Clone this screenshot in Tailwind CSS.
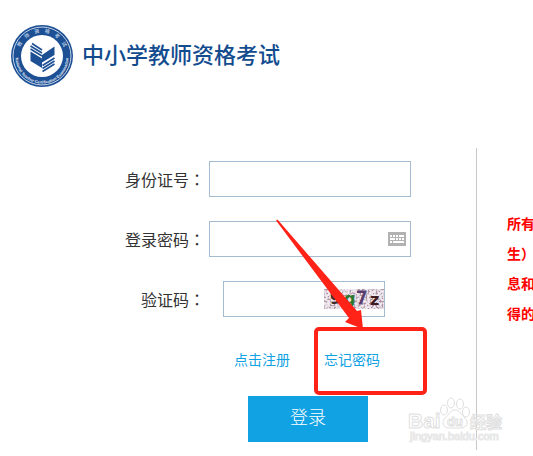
<!DOCTYPE html>
<html lang="zh-CN">
<head>
  <meta charset="UTF-8">
  <title>中小学教师资格考试</title>
  <script src="https://cdn.jsdelivr.net/npm/@tailwindcss/browser@4"></script>
</head>
<body class="bg-white min-h-screen overflow-x-hidden font-['Liberation_Sans','Noto_Sans_CJK_SC',sans-serif] text-[#333]">
  <header class="flex items-center gap-2 pt-6 pl-2.5">
    <svg class="size-16 shrink-0" viewBox="0 0 64 64" role="img" aria-label="徽标">
      <defs>
        <path id="ringTop" d="M8.500 32a23.500 23.500 0 0 1 47 0"/>
        <path id="ringBottom" d="M6 28A26.500 26.500 0 1 0 58 28"/>
      </defs>
      <circle cx="32" cy="32" r="31" fill="#1c4f94"/>
      <circle cx="32" cy="32" r="29" fill="none" stroke="#c5d4e8" stroke-width="1"/>
      <circle cx="32" cy="32" r="21" fill="#fff"/>
      <text fill="#a9c0de" font-size="5" font-weight="bold"><textPath href="#ringTop" startOffset="50%" text-anchor="middle">教　师　资　格　考　试</textPath></text>
      <text fill="#e4ecf6" font-size="4" font-weight="bold"><textPath href="#ringBottom" startOffset="50%" text-anchor="middle">National Teacher Certification Examination</textPath></text>
      <path fill="#1c4f94" d="M20.500 27.500L32 34.500V44L20.500 37zM32 31L44.500 22.500V31L32 38.500z"/>
      <path fill="none" stroke="#1c4f94" stroke-width="1.600" d="M20.500 25L32 32M20.500 22L32 29M22 19.500l10 6.500M32.500 41.500l12-7.500M32.500 44.500l12-7.500M32.500 47.500L44.500 40"/>
    </svg>
    <h1 class="text-[22px] leading-8 font-medium text-[#134c8e] whitespace-nowrap">中小学教师资格考试</h1>
  </header>

  <main class="mt-[60px] flex">
    <form class="relative w-[476px] shrink-0 pt-[13px] pb-2 text-base">
      <div class="flex items-center justify-end gap-1 pr-[65px]">
        <label for="idcard" class="pt-0.5">身份证号<span class="font-['Noto_Sans_CJK_TC',sans-serif]" lang="zh-TW">：</span></label>
        <input type="text" id="idcard" name="idcard" class="h-9 w-[202px] border border-[#a5bbd0] px-2 outline-none">
      </div>
      <div class="relative mt-6 flex items-center justify-end gap-1 pr-[65px]">
        <label for="password" class="pt-0.5">登录密码<span class="font-['Noto_Sans_CJK_TC',sans-serif]" lang="zh-TW">：</span></label>
        <input type="password" id="password" name="password" class="h-9 w-[202px] border border-[#a5bbd0] pl-2 pr-8 outline-none">
        <button type="button" aria-label="软键盘" class="absolute right-[70px]">
          <svg class="h-3.5 w-[18px]" viewBox="0 0 18 14" shape-rendering="crispEdges">
            <rect width="18" height="14" rx="1" fill="#b2b2b2"/>
            <path fill="#fff" d="M2 3h2v2H2zM5 3h2v2H5zM8 3h2v2H8zM11 3h5v2h-5zM2 6h5v2H2zM8 6h2v2H8zM11 6h2v2h-2zM14 6h2v2h-2zM2 9h2v2H2zM5 9h11v2H5z"/>
          </svg>
        </button>
      </div>
      <div class="relative mt-6 flex items-center justify-end gap-[18px] pr-[91px]">
        <label for="captcha" class="pt-0.5">验证码<span class="font-['Noto_Sans_CJK_TC',sans-serif]" lang="zh-TW">：</span></label>
        <input type="text" id="captcha" name="captcha" class="h-9 w-[162px] border border-[#a5bbd0] pl-2 pr-16 outline-none">
        <svg class="absolute right-[92px] h-5 w-[60px]" viewBox="0 0 60 20">
          <filter id="noise" x="0" y="0" width="100%" height="100%" color-interpolation-filters="sRGB">
            <feTurbulence type="fractalNoise" baseFrequency="0.5" numOctaves="2" seed="8"/>
            <feColorMatrix values="0.2 0 0 0 0.55  0 0.2 0 0 0.47  0 0 0.2 0 0.54  5 0 0 0 -2.3"/>
          </filter>
          <rect width="60" height="20" fill="#f1ebf1"/>
          <rect width="60" height="20" filter="url(#noise)"/>
          <g font-family="DejaVu Sans" font-size="16" font-weight="bold">
            <text x="6" y="15" fill="#3b2a2c">9</text>
            <text x="20" y="15" fill="#2b7a2b">g</text>
            <text x="32" y="15" fill="#573c70" stroke="#573c70" font-size="18" font-weight="normal">7</text>
            <text x="46" y="16" fill="#3f1c20">z</text>
          </g>
        </svg>
      </div>
      <div class="mt-[31px] flex gap-[34px] pl-[234px] text-sm leading-6 text-[#10a2e3]">
        <a href="#register">点击注册</a>
        <a href="#forgot">忘记密码</a>
      </div>
      <button type="submit" class="mt-6 ml-[248px] block h-[46px] w-[120px] bg-[#10a2e3] pb-0.5 text-lg font-light text-white">登录</button>

      <!-- arrow and frame round the forgotten password link -->
      <svg class="pointer-events-none absolute top-[71px] left-[275px] h-[178px] w-[156px]" viewBox="0 0 156 178" aria-hidden="true">
        <path fill="#ff2317" d="M1 1.500L2.500 0.500L82 92L86 91L88 110L70 103L74 99z"/>
        <rect x="41" y="110" width="109" height="64" rx="3" fill="none" stroke="#ff2317" stroke-width="4"/>
      </svg>
    </form>

    <aside class="grow border-l border-[#c8c8c8] pt-[61px] pl-[30px] text-sm leading-[30px] font-bold whitespace-nowrap text-[#f00]">
      <p>所有</p>
      <p>生）</p>
      <p>息和</p>
      <p>得的</p>
    </aside>
  </main>

  <svg class="pointer-events-none absolute top-[396px] left-[406px] h-[50px] w-[100px]" viewBox="0 0 100 50" fill="#fff" stroke="#dfdfdf" stroke-width="1" aria-hidden="true">
    <g font-family="Liberation Sans, Noto Sans CJK SC, sans-serif" font-weight="bold">
      <text x="2" y="32" font-size="21">Bai</text>
      <path d="M49 14c-5 0-6 5-10 8-4 4-2 10 4 10h12c6 0 8-6 4-10-4-3-5-8-10-8z"/>
      <ellipse cx="38" cy="14" rx="3.500" ry="5"/>
      <ellipse cx="45" cy="7" rx="3.500" ry="5"/>
      <ellipse cx="54" cy="8" rx="3.500" ry="5"/>
      <ellipse cx="60" cy="16" rx="3.500" ry="5"/>
      <text x="41" y="30" font-size="13">du</text>
      <text x="64" y="32" font-size="16">经验</text>
      <text x="4" y="44" font-size="11" font-weight="normal" fill="#eee" stroke="#e8e8e8">jingyan.baidu.com</text>
    </g>
  </svg>
</body>
</html>
